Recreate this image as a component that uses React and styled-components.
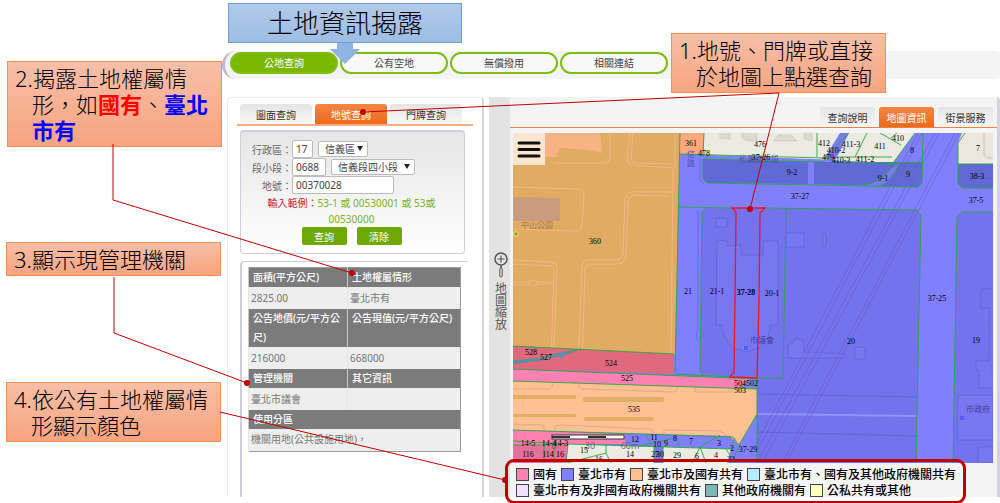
import { useState } from "react";
import styled, { createGlobalStyle } from "styled-components";

const GlobalStyle = createGlobalStyle`
  * {
    box-sizing: border-box;
  }
  body {
    margin: 0;
    background: #fff;
    font-family: "Noto Sans", "Noto Sans CJK TC", sans-serif;
    font-size: 10px;
    color: #555;
  }
  button, input, select {
    font: inherit;
    margin: 0;
  }
`;
const Page = styled.div`
  position: relative;
  padding: 51px 0 7px 222px;
`;
const Nav = styled.nav`
  display: flex;
  gap: 2px;
  height: 28px;
  margin-bottom: 18px;
  padding: 1px 0 0 5px;
  background: #f4f4f4;
  border-left: 3px solid #b9b8d0;
  border-radius: 14px 4px 4px 14px;
`;
const NavLink = styled.a`
  width: 108px;
  height: 22px;
  line-height: 18px;
  text-align: center;
  text-decoration: none;
  border: 2px solid #80bd14;
  border-radius: 11px;
  color: ${(props) => (props.$active ? "#fff" : "#444")};
  background: ${(props) => (props.$active ? "#7ab800" : "#f8f8f8")};
`;
const Main = styled.main`
  display: flex;
  gap: 5px;
  padding-left: 5px;
`;
const QueryPanel = styled.section`
  display: flex;
  flex-direction: column;
  flex: 0 0 257px;
  padding: 6px 9px 0;
  border: 1px solid #ededed;
  border-bottom: 0;
  border-right: 2px solid #d6d5dc;
  border-radius: 4px 4px 0 0;
`;
const Tabs = styled.div`
  display: flex;
  gap: 3px;
  padding-left: 3px;
  border-bottom: 2px solid #f4ac82;
`;
const MapTabs = styled.div`
  display: flex;
  justify-content: flex-end;
  gap: 4px;
  padding-right: 4px;
  border-bottom: 1px solid #ee8340;
`;
const Tab = styled.button`
  width: ${(props) => (props.$small ? "55px" : "72px")};
  height: 20px;
  padding: 0;
  border: 0;
  border-radius: 3px 3px 0 0;
  color: ${(props) => (props.$active ? "#fff" : "#333")};
  background: ${(props) =>
    props.$active
      ? "linear-gradient(#f58544, #ec6a1c)"
      : "linear-gradient(#e4e4e4, #f8f8f8)"};
`;
const SearchForm = styled.form`
  width: 225px;
  margin: 4px 0 7px 3px;
  padding: 8px 13px 8px 11px;
  border: 1px solid #cfcfda;
  border-top: 2px solid #cfcfda;
  border-radius: 4px;
  background: linear-gradient(#e6e6e6, #fff);
`;
const Field = styled.div`
  display: flex;
  align-items: center;
  height: 18px;
`;
const Label = styled.label`
  width: 40px;
  text-align: right;
  color: #666;
`;
const TextInput = styled.input`
  width: ${(props) => props.$width};
  height: 18px;
  padding: 0 3px;
  border: 1px solid #bbb;
  border-radius: 2px;
  background: #fff;
  color: #444;
`;
const SelectBox = styled.div`
  display: flex;
  position: relative;
  width: ${(props) => props.$width};
  margin-left: 5px;

  &::after {
    content: "";
    position: absolute;
    right: 5px;
    top: 5px;
    border: 3px solid transparent;
    border-top: 5px solid #222;
    border-bottom: 0;
    pointer-events: none;
  }
`;
const Select = styled.select`
  appearance: none;
  width: 100%;
  height: 16px;
  padding: 0 6px;
  border: 1px solid #bbb;
  border-radius: 2px;
  background: #fff;
  color: #444;
`;
const Hint = styled.p`
  margin: 0;
  padding-top: 1px;
  line-height: 16px;
  text-align: center;
  color: #79b41c;
`;
const HintTitle = styled.span`
  color: #c8202c;
`;
const Actions = styled.div`
  display: flex;
  justify-content: center;
  gap: 10px;
`;
const ActionButton = styled.button`
  width: 45px;
  height: 18px;
  padding: 0;
  border: 0;
  border-radius: 2px;
  background: #6ea800;
  color: #fff;
`;
const ResultBox = styled.div`
  flex: 1;
  width: 228px;
  margin-left: 3px;
  padding: 5px 6px;
  border-left: 2px solid #cfcfda;
  border-top: 1px solid #cfcfda;
  border-radius: 4px 0 0 0;
`;
const ResultTable = styled.table`
  width: 213px;
  border: 1px solid #9b9b9b;
  border-collapse: collapse;
  table-layout: fixed;
  line-height: 19px;
`;
const HeadCell = styled.th`
  width: ${(props) => props.$width};
  padding: 0 4px;
  text-align: left;
  vertical-align: top;
  font-weight: 500;
  color: #fff;
  background: #7b7b7b;
  border-left: 1px solid #c8c8c8;
`;
const DataCell = styled.td`
  height: 22px;
  padding: 0 2px;
  color: #777;
  background: #eee;
  border-left: 1px solid #e6e6e6;
`;
const MapPanel = styled.section`
  display: flex;
  flex: 1;
  min-width: 0;
  background: #f4f4f4;
  border-right: 3px solid #d3d2dd;
  border-radius: 4px 4px 0 0;
`;
const ZoomBar = styled.aside`
  display: flex;
  flex-direction: column;
  align-items: center;
  gap: 4px;
  flex: 0 0 21px;
  padding: 155px 0 0 3px;
  background: #e3e3e3;
  font-size: 12px;
  line-height: 12px;
`;
const ZoomText = styled.div`
  width: 12px;
  text-align: center;
`;
const MapBody = styled.div`
  flex: 1;
  min-width: 0;
  padding-top: 10px;
`;
const MapFrame = styled.div`
  position: relative;
  margin: 5px 4px 0 3px;
`;
const MapSvg = styled.svg`
  display: block;
  width: 100%;
`;
const MenuButton = styled.button`
  position: absolute;
  left: 0;
  top: 0;
  width: 32px;
  height: 32px;
  padding: 0;
  border: 0;
  background: #fae5d1;

  svg {
    display: block;
  }
`;
const Legend = styled.ul`
  display: flex;
  flex-wrap: wrap;
  gap: 2px 4px;
  max-width: 460px;
  margin: 0;
  padding: 4px 0 0 6px;
  list-style: none;
`;
const LegendItem = styled.li`
  display: flex;
  align-items: center;
  gap: 4px;
  height: 14px;
  font-size: 12px;
  font-weight: 500;
  white-space: nowrap;
  color: #000;
`;
const Swatch = styled.span`
  width: 13px;
  height: 13px;
  border: 1px solid #444;
  background: ${(props) => props.$color};
`;
const Callout = styled.div`
  position: absolute;
  left: ${(props) => props.$left};
  top: ${(props) => props.$top};
  width: 215px;
  padding: 3px 0 3px 24px;
  border: 1px solid #ef9058;
  background: linear-gradient(#f8bfa8, #f7a480);
  font-size: 22px;
  font-weight: 300;
  line-height: 26px;
  text-indent: -17px;
  white-space: nowrap;
  color: #000;
`;
const Mark = styled.strong`
  font-weight: 700;
  color: ${(props) => props.$color};
`;
const Title = styled.h1`
  position: absolute;
  left: 228px;
  top: 3px;
  width: 234px;
  margin: 0;
  border: 1px solid #6fa0d8;
  background: linear-gradient(#b1cae9, #9dbde4);
  font-size: 26px;
  font-weight: 300;
  line-height: 38px;
  text-align: center;
  color: #000;
`;
const LegendOutline = styled.div`
  position: absolute;
  left: 505px;
  bottom: 0;
  width: 461px;
  height: 45px;
  border: 3px solid #c00000;
  border-radius: 9px;
`;
const Overlay = styled.svg`
  position: absolute;
  left: 0;
  top: 0;
  pointer-events: none;
`;

const navItems = ["公地查詢", "公有空地", "無償撥用", "相關連結"];
const queryTabs = ["圖面查詢", "地號查詢", "門牌查詢"];
const mapTabs = ["查詢說明", "地圖資訊", "街景服務"];
const legendItems = [
  ["國有", "#ff80b3"],
  ["臺北市有", "#8080ff"],
  ["臺北市及國有共有", "#ffc090"],
  ["臺北市有、國有及其他政府機關共有", "#b5ecff"],
  ["臺北市有及非國有政府機關共有", "#f2e0ff"],
  ["其他政府機關有", "#7db8b4"],
  ["公私共有或其他", "#ffffc0"],
];
// [text, center x, baseline y]
const parcels = [
  ["361", 691, 146], ["478", 704, 156], ["476", 760, 147], ["37-26", 761, 160],
  ["412", 824, 146], ["410-2", 836, 153], ["479", 828, 160], ["411-3", 851, 147],
  ["410-3", 841, 163], ["411", 880, 149], ["411-2", 865, 162], ["410", 898, 141],
  ["8", 912, 153], ["7", 978, 151], ["9-2", 792, 175], ["9-1", 883, 181],
  ["9", 908, 177], ["38-3", 977, 179], ["37-27", 800, 199], ["37-5", 976, 203],
  ["360", 595, 244], ["21", 688, 294], ["21-1", 717, 294], ["37-28", 746, 295],
  ["20-1", 772, 296], ["20", 851, 344], ["37-25", 937, 301], ["19", 976, 343],
  ["528", 531, 355], ["527", 546, 360], ["524", 611, 366], ["525", 627, 381],
  ["504", 740, 386], ["502", 752, 386], ["503", 740, 393], ["535", 634, 412],
  ["14-5", 528, 446], ["14-4", 549, 446], ["14-3", 561, 446], ["116", 528, 457],
  ["114", 548, 457], ["16", 560, 457], ["15", 584, 453], ["16", 599, 462],
  ["12", 635, 442], ["11", 654, 440], ["10", 657, 447], ["9", 666, 446],
  ["8", 675, 441], ["7", 691, 444], ["3", 719, 446], ["2", 732, 451],
  ["14", 630, 457], ["27", 655, 457], ["30", 660, 457], ["29", 677, 458],
  ["6", 697, 459], ["4", 716, 458], ["22", 731, 462], ["37-29", 748, 452],
];

const LandMap = () => (
  <MapSvg viewBox="513 133 480 330" role="img" aria-label="地圖">
    <rect x="513" y="133" width="480" height="330" fill="#8080ff" />
    {/* park block */}
    <path d="M513 133H680L675 355L513 346Z" fill="#e0ac64" />
    <path d="M545 133H600L602 153Q580 148 560 148L556 157H545Z" fill="#f8b384" />
    <path d="M513 197L560 198V221H513Z" fill="#cb9b80" />
    <g fill="none" stroke="#f3b47f" strokeWidth="1.2">
      <path d="M554 163H604Q610 163 610 156V133M630 133L627 158Q627 164 632 165L675 168V133M633 133L631 158Q631 163 635 163L673 164" />
      <path d="M513 187L579 189Q584 190 584 196L582 226Q581 231 576 231L513 229" />
      <path d="M675 192H632Q625 193 625 200L623 253Q622 260 615 260H587Q582 261 582 267L578 376Q578 380 583 380" />
      <path d="M668 196L634 195Q628 196 628 202L626 255Q625 263 618 264H590Q585 264 585 270L582 364L670 367" />
      <path d="M513 260L551 262Q557 263 557 268L553 373H513M513 264L550 266Q554 266 554 271L551 364L513 361" />
      <path d="M513 282H530M537 284H553M513 285H530M537 282H553M673 170L671 370" />
      <ellipse cx="533" cy="283" rx="4" ry="3" />
    </g>
    {/* blocks along the top */}
    <path d="M680 133H704L703 154H679Z" fill="#ffa97c" />
    <path d="M704 133H915L893 163L703 155Z" fill="#ecebe2" />
    <path d="M704 155L838 160V163L704 159Z" fill="#8080ff" />
    <path d="M840 133H849L836 159H824Z" fill="#7979f0" />
    <path d="M962 133H993V164H958V143Z" fill="#ece6df" />
    <path d="M984 133V155L989 158H993" fill="none" stroke="#c9c6c0" />
    <path d="M720 133V139H730V133M742 133V138L747 141H757V133M773 141L778 135H791L797 141H773M804 133V139L812 141V133" fill="#dcd9d1" stroke="#cfccc5" strokeWidth=".7" />
    <path d="M703 159L808 162V184L707 183L703 179Z" fill="#6069d5" />
    <path d="M814 162H922V182L918 187L814 184Z" fill="#6069d5" />
    <path d="M889 170L899 163Q892 184 876 187L862 185Q878 184 889 170Z" fill="#7a7af4" />
    <path d="M958 164H993V188H963L958 184Z" fill="#6069d5" />
    {/* large city parcels */}
    <path d="M706 208L917 210L921 215L916 463H757V378L702 374L700 371L702 212Z" fill="#7472ec" />
    <path d="M957 216L962 212H993V463H953Z" fill="#7472ec" />
    <g fill="#7977f0" stroke="#6260d2" strokeWidth=".7">
      <path d="M717 240L727 241V246L741 245V255H763V241H778V325H770Q769 351 744 351Q724 348 722 325H716Z" />
      <path d="M716 218H727V227H716ZM786 233H804V247H786ZM823 234H826V246H823Z" />
      <path d="M788 345L793 343L796 338L803 341L804 352L845 354V358H788ZM855 347H865V359H855ZM981 289H993M981 289V308H989V361H976V370H979V388H993" />
      <path d="M958 395H993V440H957ZM978 447H993V463H978Z" />
    </g>
    <g fill="none" stroke="#6260d2" strokeWidth=".7">
      <path d="M757 394L917 397M757 432L917 436M698 210V325L696 339L699 342M700 159V180L704 184" />
      <path d="M897 172L915 183L911 187M981 168H993M981 178H993M981 168V178" />
    </g>
    <path d="M757 414L917 416" stroke="#9292ff" strokeWidth="2" />
    <g fill="none" stroke="#6462c8" strokeWidth=".8" opacity=".8">
      <path d="M918 133L755 447M922 133L758 450M935 133L757 463M939 133L762 463M955 133L782 463M959 133L786 463" />
    </g>
    {/* state owned strips */}
    <path d="M513 346L674 354V374L513 369Z" fill="#e0687f" />
    <path d="M513 369L757 379V389L513 381Z" fill="#ff80b3" />
    <path d="M513 381L757 389V414L739 445L730 436L513 430Z" fill="#ffc092" />
    <path d="M513 361L540 358L555 354L581 349L564 355L562 358L557 356L540 360L513 364Z" fill="#5d8aca" stroke="#31a85c" strokeWidth=".6" />
    <path d="M740 387L750 379H757V389Z" fill="#6f8ee0" />
    <g fill="#e1ad68">
      <rect x="513" y="395" width="63" height="4" rx="1" />
      <rect x="583" y="397" width="81" height="5" rx="2" />
      <rect x="513" y="414" width="63" height="3" rx="1" />
      <rect x="584" y="417" width="70" height="4" rx="2" />
    </g>
    <path d="M513 389H549Q553 388 553 381M579 380V385Q579 389 584 389L674 392Q678 391 678 382M695 377V392H733M513 424L544 425V437M555 437V427Q555 425 560 425L650 429Q654 430 654 435M664 435V430L720 431L729 437" fill="none" stroke="#d99c88" strokeWidth=".7" />
    <path d="M513 430L625 434V444H568L566 463H513Z" fill="#ff80b3" />
    <path d="M513 445L566 446V463H513Z" fill="#e8709c" />
    <path d="M568 444L731 449L727 463H566Z" fill="#ecebe2" />
    <path d="M654 446H663V463H654Z" fill="#7779ef" />
    {/* parcel boundaries */}
    <g fill="none" stroke="#25a83d" strokeWidth=".9">
      <path d="M680 133L675 374M704 133L703 154M679 154L824 158L838 162L923 163M824 159L849 133M817 133V157M704 159L824 162" />
      <path d="M867 133L855 157M837 157H892M915 133L893 163L888 172Q878 184 862 185M899 163Q892 184 876 187M880 133L901 145M891 138L897 133" />
      <path d="M703 159V179L708 183L918 187L922 183L923 133M965 133L958 143V183L962 188H993M958 164H993" />
      <path d="M678 207L732 208M763 208L917 210L921 215L916 463M962 212H993M962 212L957 217L953 463M706 208L702 212L700 371L703 375M786 209L783 378H757" />
      <path d="M513 346L674 354M513 369L757 379V463M513 381L757 389M513 430L733 437L739 445L757 414M675 374L757 378" />
      <path d="M513 441L568 444L731 449L735 438M513 445H566M544 441V463M554 441V463M568 444L566 463M606 444V453L567 463M606 453L611 463M646 435L651 444M640 446L675 438L680 446M720 435L700 447L692 463M700 447L706 463M726 449L735 463M654 446V463M663 446V463M740 445L731 463M740 387L750 379" />
    </g>
    <path d="M732 208H765L760 213L759 300L757 378L730 377L734 372L735 300L736 212Z" fill="none" stroke="#f01424" strokeWidth="1.3" />
    {/* place names of the base map */}
    <g fontFamily="Noto Sans CJK TC, sans-serif" fontSize="8" fill="#6b5a66">
      <text x="521" y="228" fill="#9b7a4d">中山公園</text>
      <text x="750" y="343" fill="#44409c">市議會</text>
      <text x="966" y="412" fill="#44409c">市政府</text>
      <text x="739" y="162" fill="#5752a8">松壽路二段</text>
      <text x="687" y="157" fill="#5752a8">信</text>
      <text x="687" y="166" fill="#5752a8">路</text>
    </g>
    <circle cx="516" cy="234" r="3" fill="#efc56c" />
    <circle cx="516" cy="234" r="1.5" fill="#7c9a20" />
    <circle cx="746" cy="348" r="3" fill="#7e86ff" />
    <rect x="744" y="346" width="4" height="4" fill="#4c5cf5" />
    <rect x="960" y="416" width="4" height="4" fill="#4c5cf5" />
    {/* scale bar */}
    <rect x="552" y="435" width="72" height="4" fill="#fff" stroke="#333" />
    <path d="M552 436H570V438H552ZM588 436H606V438H588Z" fill="#333" />
    <g fontFamily="Open Sans, sans-serif" fontSize="9" textAnchor="middle" fill="#6d5c65">
      <text x="554" y="449">0</text>
      <text x="590" y="449">30</text>
      <text x="630" y="449">60m</text>
    </g>
    <g fontFamily="Liberation Serif, serif" fontSize="8" textAnchor="middle" fill="#000">
      {parcels.map(([name, x, y]) => (
        <text key={`${name}-${x}`} x={x} y={y} fontWeight={name === "37-28" ? 700 : 400}>
          {name}
        </text>
      ))}
    </g>
  </MapSvg>
);

const Connectors = () => (
  <Overlay width="1000" height="503" aria-hidden="true">
    <path d="M337 43H353V49H360L345 64L330 49H337Z" fill="#8fb4e3" />
    <g fill="none" stroke="#c00000" strokeWidth="1">
      <path d="M363 112L779 93L750 209" />
      <path d="M113 144V200L352 273" />
      <path d="M114 277V333L247 383" />
      <path d="M220 412L505 480" />
    </g>
    <g fill="#c00000">
      <circle cx="363" cy="112" r="3" />
      <circle cx="750" cy="209" r="3" />
      <circle cx="352" cy="273" r="3" />
      <circle cx="247" cy="383" r="3" />
      <circle cx="505" cy="480" r="3" />
    </g>
  </Overlay>
);

const App = () => {
  const [queryTab, setQueryTab] = useState(1);
  const [mapTab, setMapTab] = useState(1);
  const [landNo, setLandNo] = useState("00370028");

  const handleFormSubmit = (e) => {
    e.preventDefault();
  };

  return (
    <Page>
      <GlobalStyle />
      <Nav>
        {navItems.map((item, i) => (
          <NavLink key={item} href="#" $active={i === 0}>
            {item}
          </NavLink>
        ))}
      </Nav>
      <Main>
        <QueryPanel>
          <Tabs>
            {queryTabs.map((tab, i) => (
              <Tab key={tab} $active={i === queryTab} onClick={() => setQueryTab(i)}>
                {tab}
              </Tab>
            ))}
          </Tabs>
          <SearchForm onSubmit={handleFormSubmit}>
            <Field>
              <Label htmlFor="district">行政區：</Label>
              <TextInput id="district" $width="21px" defaultValue="17" />
              <SelectBox $width="50px">
                <Select aria-label="行政區">
                  <option>信義區</option>
                </Select>
              </SelectBox>
            </Field>
            <Field>
              <Label htmlFor="section">段小段：</Label>
              <TextInput id="section" $width="34px" defaultValue="0688" />
              <SelectBox $width="84px">
                <Select aria-label="段小段">
                  <option>信義段四小段</option>
                </Select>
              </SelectBox>
            </Field>
            <Field>
              <Label htmlFor="landNo">地號：</Label>
              <TextInput
                id="landNo"
                $width="102px"
                value={landNo}
                onChange={(e) => setLandNo(e.target.value)}
              />
            </Field>
            <Hint>
              <HintTitle>輸入範例：</HintTitle>53-1 或 00530001 或 53或
              <br />
              00530000
            </Hint>
            <Actions>
              <ActionButton type="submit">查詢</ActionButton>
              <ActionButton type="button" onClick={() => setLandNo("")}>
                清除
              </ActionButton>
            </Actions>
          </SearchForm>
          <ResultBox>
            <ResultTable>
              <tbody>
                <tr>
                  <HeadCell $width="99px">面積(平方公尺)</HeadCell>
                  <HeadCell>土地權屬情形</HeadCell>
                </tr>
                <tr>
                  <DataCell>2825.00</DataCell>
                  <DataCell>臺北市有</DataCell>
                </tr>
                <tr>
                  <HeadCell>公告地價(元/平方公尺)</HeadCell>
                  <HeadCell>公告現值(元/平方公尺)</HeadCell>
                </tr>
                <tr>
                  <DataCell>216000</DataCell>
                  <DataCell>668000</DataCell>
                </tr>
                <tr>
                  <HeadCell>管理機關</HeadCell>
                  <HeadCell>其它資訊</HeadCell>
                </tr>
                <tr>
                  <DataCell>臺北市議會</DataCell>
                  <DataCell />
                </tr>
                <tr>
                  <HeadCell colSpan={2}>使用分區</HeadCell>
                </tr>
                <tr>
                  <DataCell colSpan={2}>機關用地(公共設施用地)，</DataCell>
                </tr>
              </tbody>
            </ResultTable>
          </ResultBox>
        </QueryPanel>
        <MapPanel>
          <ZoomBar>
            <svg width="14" height="27" viewBox="0 0 14 27" fill="none" stroke="#555">
              <circle cx="7" cy="7" r="6" strokeWidth="1.5" />
              <path d="M3.5 7H10.5M7 3.5V10.5" strokeWidth="1.2" />
              <path d="M7 13V16" strokeWidth="1.5" />
              <rect x="5.8" y="16" width="2.4" height="9" rx="1" />
            </svg>
            <ZoomText>地圖縮放</ZoomText>
          </ZoomBar>
          <MapBody>
            <MapTabs>
              {mapTabs.map((tab, i) => (
                <Tab key={tab} $small $active={i === mapTab} onClick={() => setMapTab(i)}>
                  {tab}
                </Tab>
              ))}
            </MapTabs>
            <MapFrame>
              <LandMap />
              <MenuButton aria-label="選單">
                <svg width="32" height="32" stroke="#111" strokeWidth="3" strokeLinecap="round">
                  <path d="M6 10H26M6 16.5H26M6 23H26" />
                </svg>
              </MenuButton>
            </MapFrame>
            <Legend>
              {legendItems.map(([name, color]) => (
                <LegendItem key={name}>
                  <Swatch $color={color} />
                  {name}
                </LegendItem>
              ))}
            </Legend>
          </MapBody>
        </MapPanel>
      </Main>
      <Title>土地資訊揭露</Title>
      <Callout $left="671px" $top="33px">
        1.地號、門牌或直接
        <br />
        於地圖上點選查詢
      </Callout>
      <Callout $left="7px" $top="61px">
        2.揭露土地權屬情
        <br />
        形，如<Mark $color="#f00">國有</Mark>、<Mark $color="#00f">臺北</Mark>
        <br />
        <Mark $color="#00f">市有</Mark>
      </Callout>
      <Callout $left="6px" $top="242px">
        3.顯示現管理機關
      </Callout>
      <Callout $left="6px" $top="382px">
        4.依公有土地權屬情
        <br />
        形顯示顏色
      </Callout>
      <LegendOutline />
      <Connectors />
    </Page>
  );
};

export default App;
